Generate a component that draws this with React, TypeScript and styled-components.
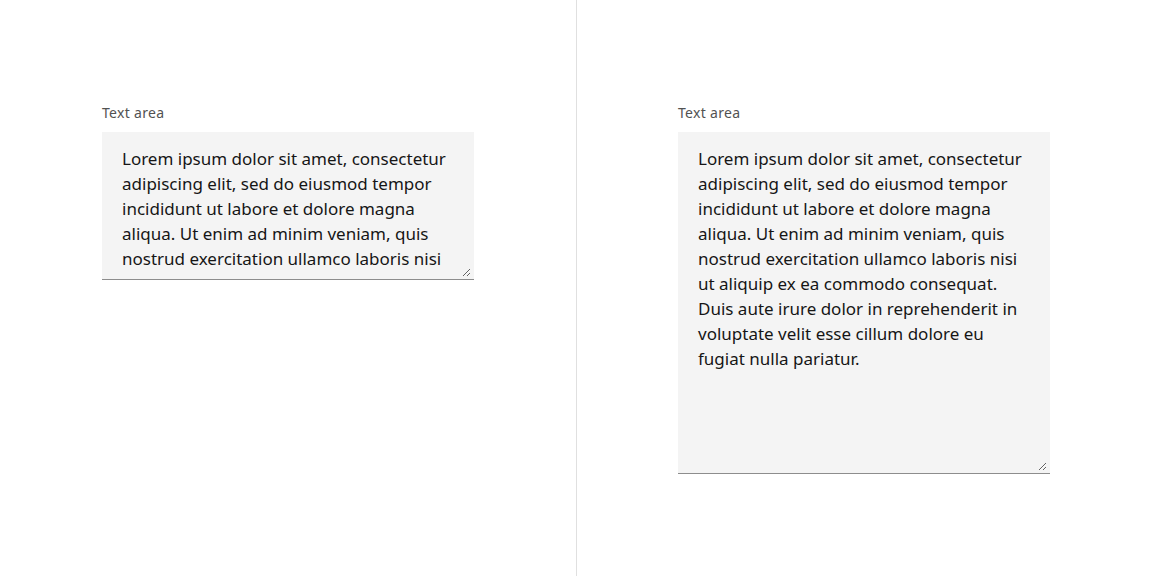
import React from "react";
import styled, { createGlobalStyle } from "styled-components";

const Global = createGlobalStyle`
  html, body { margin: 0; padding: 0; background: #ffffff; }
  body { font-family: "Noto Sans", "Liberation Sans", sans-serif; }
`;

const Page = styled.div`
  display: grid;
  grid-template-columns: 576px 576px;
  height: 576px;
  width: 1152px;
`;

const Column = styled.div<{ $divider?: boolean }>`
  box-sizing: border-box;
  padding: 104px 0 0 ${(p) => (p.$divider ? 101 : 102)}px;
  border-left: ${(p) => (p.$divider ? "1px solid #e0e0e0" : "none")};
`;

const Field = styled.div`
  display: flex;
  flex-direction: column;
  width: 372px;
`;

const Label = styled.label`
  font-family: "Noto Sans", "Liberation Sans", sans-serif;
  font-size: 14px;
  line-height: 18px;
  color: #525252;
  margin-bottom: 10px;
  letter-spacing: 0.32px;
`;

const Area = styled.textarea<{ $h: number }>`
  box-sizing: border-box;
  width: 372px;
  height: ${(p) => p.$h}px;
  padding: 14px 17px 0 20px;
  margin: 0;
  border: none;
  border-right: 3px solid #f4f4f4;
  border-bottom: 2px solid #f4f4f4;
  box-shadow: 0 1px 0 #8d8d8d;
  background: #f4f4f4;
  color: #161616;
  font-family: "Noto Sans", "Liberation Sans", sans-serif;
  font-size: 17px;
  line-height: 25px;
  resize: vertical;
  overflow: hidden;
  outline: none;
  border-radius: 0;
  display: block;
`;

const TEXT =
  "Lorem ipsum dolor sit amet, consectetur adipiscing elit, sed do eiusmod tempor incididunt ut labore et dolore magna aliqua. Ut enim ad minim veniam, quis nostrud exercitation ullamco laboris nisi ut aliquip ex ea commodo consequat. Duis aute irure dolor in reprehenderit in voluptate velit esse cillum dolore eu fugiat nulla pariatur.";

export default function App() {
  return (
    <>
      <Global />
      <Page>
        <Column>
          <Field>
            <Label>Text area</Label>
            <Area $h={147} readOnly defaultValue={TEXT} />
          </Field>
        </Column>
        <Column $divider>
          <Field>
            <Label>Text area</Label>
            <Area $h={341} readOnly defaultValue={TEXT} />
          </Field>
        </Column>
      </Page>
    </>
  );
}
